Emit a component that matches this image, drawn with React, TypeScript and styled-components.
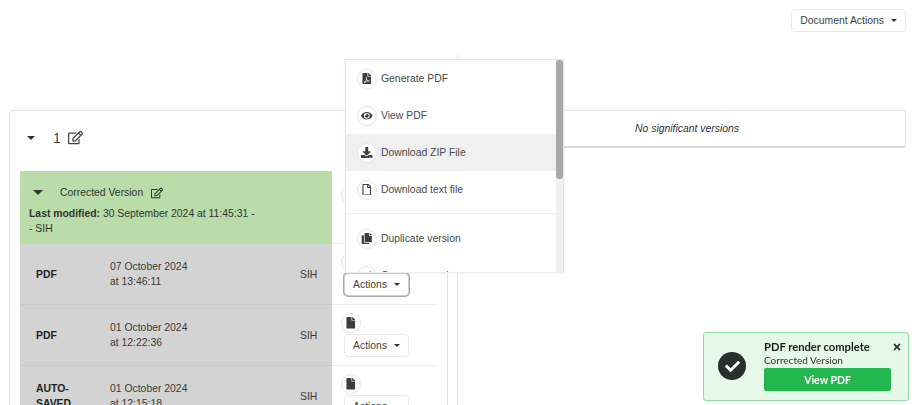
import React from 'react';
import styled, { createGlobalStyle } from 'styled-components';
import { IconType } from 'react-icons';
import { FaCheck, FaCopy, FaDownload, FaEye, FaFile, FaFilePdf, FaRegEdit, FaRegFile, FaTimes, FaExchangeAlt, FaTrash, FaLock } from 'react-icons/fa';

const GlobalStyle = createGlobalStyle`
    html, body {
        margin: 0;
        padding: 0;
        background: #fff;
    }
    body {
        font-family: "Liberation Sans", Arial, sans-serif;
        font-size: 10.4px;
        line-height: 15px;
        color: #3a3a3a;
    }
`;

const Page = styled.div`
    width: 914px;
    height: 405px;
    overflow: hidden;
    box-sizing: border-box;
    padding: 9px 8px 0 9px;
`;

const TopBar = styled.div`
    display: flex;
    justify-content: flex-end;
    height: 23px;
`;

const Button = styled.button<{ $focused?: boolean }>`
    display: inline-flex;
    align-items: center;
    height: 23px;
    box-sizing: border-box;
    padding: 0 8px;
    gap: 7px;
    background: #fff;
    border: 1px solid ${(p) => (p.$focused ? '#cfcfcf' : '#e8e8e8')};
    box-shadow: ${(p) => (p.$focused ? '0 0 0 1px #a8a8a8' : 'none')};
    border-radius: 4px;
    font: inherit;
    color: #3f3f3f;
`;

const Caret = styled.span<{ $size?: number }>`
    display: inline-block;
    width: 0;
    height: 0;
    border-left: ${(p) => p.$size ?? 3}px solid transparent;
    border-right: ${(p) => p.$size ?? 3}px solid transparent;
    border-top: ${(p) => p.$size ?? 3}px solid #333;
`;

const Columns = styled.div`
    display: grid;
    grid-template-columns: 448px 1fr;
    margin-top: 21px;
`;

const LeftColumn = styled.div`
    padding-top: 57px;
    padding-right: 10px;
    box-sizing: border-box;
    width: 449px;
`;

const RightColumn = styled.div`
    border-left: 1px solid #e4e4e4;
    height: 400px;
    padding-top: 57px;
    box-sizing: border-box;
`;

const NoVersions = styled.div`
    height: 38px;
    margin-left: 10px;
    box-sizing: border-box;
    display: flex;
    align-items: center;
    justify-content: center;
    border: 1px solid #e4e4e4;
    border-bottom: 2px solid #dcdcdc;
    border-radius: 3px;
    font-style: italic;
    color: #333;
`;

const Card = styled.div`
    border: 1px solid #e2e2e2;
    border-bottom: none;
    border-radius: 4px 4px 0 0;
    padding: 0 10px;
    height: 400px;
    box-sizing: border-box;
`;

const CardTitle = styled.div`
    display: flex;
    align-items: center;
    height: 54px;
    margin-bottom: 6px;
    padding-left: 7px;
    font-size: 14px;
    color: #444;

    svg {
        font-size: 15px;
        margin-left: 7px;
        margin-top: -1px;
    }
`;

const TitleNumber = styled.span`
    margin-left: 18px;
`;

const VersionTable = styled.div`
    display: flex;
    flex-direction: column;
`;

const Row = styled.div`
    display: grid;
    grid-template-columns: 312px 104px;
`;

const HeaderCell = styled.div`
    background: #b9dca8;
    height: 73px;
    padding: 14px 8px 0 9px;
    box-sizing: border-box;
    border-bottom: 1px solid #c4d6b8;
    color: #333;
`;

const HeaderTitle = styled.div`
    display: flex;
    align-items: center;
    padding-left: 4px;

    svg {
        font-size: 12px;
        margin-left: 8px;
    }
`;

const HeaderName = styled.span`
    margin-left: 17px;
`;

const Modified = styled.div`
    margin-top: 6px;
    width: 228px;
`;

const GreyCell = styled.div`
    background: #d3d3d3;
    display: grid;
    grid-template-columns: 74px 190px 1fr;
    align-items: center;
    height: 61px;
    box-sizing: border-box;
    padding-left: 16px;
    border-bottom: 1px solid #c8c8c8;
    color: #3a3a3a;
`;

const TypeName = styled.strong`
    width: 50px;
    color: #222;
`;

const ActionCell = styled.div<{ $header?: boolean }>`
    padding: ${(p) => (p.$header ? 14 : 8)}px 0 0 9px;
    height: ${(p) => (p.$header ? 73 : 61)}px;
    box-sizing: border-box;
    border-bottom: 1px solid #ececec;
`;

const RoundIcon = styled.span`
    display: flex;
    align-items: center;
    justify-content: center;
    flex: none;
    width: 20px;
    height: 20px;
    box-sizing: border-box;
    border: 1px solid #e6e6e6;
    border-radius: 50%;
    background: #fff;
    color: #3d3d3d;
    font-size: 11.5px;
`;

const ActionsWrap = styled.div`
    position: relative;
    margin: 1px 0 0 3px;
    width: 65px;
`;

const Menu = styled.div`
    position: absolute;
    left: 1px;
    bottom: 100%;
    width: 219px;
    height: 214px;
    z-index: 5;
    background: #fff;
    border: 1px solid #e4e4e4;
    border-bottom-color: #eee;
    box-sizing: border-box;
    box-shadow: 0 1px 3px rgba(0, 0, 0, 0.05);
`;

const MenuList = styled.div`
    height: 100%;
    overflow: hidden;
    padding-right: 7px;
`;

const ScrollTrack = styled.div`
    position: absolute;
    top: 0;
    right: 0;
    bottom: 0;
    width: 7px;
    background: #f0f0f0;
`;

const ScrollThumb = styled.div`
    height: 119px;
    background: #a8a8a8;
    border-radius: 3px;
`;

const MenuItem = styled.div<{ $active?: boolean }>`
    display: flex;
    align-items: center;
    gap: 4px;
    height: 37px;
    padding-left: 11px;
    background: ${(p) => (p.$active ? '#f0f0f0' : 'transparent')};
    color: #4a4a4a;
`;

const MenuDivider = styled.div`
    height: 1px;
    background: #eee;
    margin: 5px 0 6px;
`;

const Toast = styled.div`
    position: fixed;
    right: 5px;
    bottom: 4px;
    width: 206px;
    height: 69px;
    box-sizing: border-box;
    display: flex;
    background: #e6f8e8;
    border: 1px solid #8fdc9f;
    border-radius: 3px;
    font-family: Lato, sans-serif;
    color: #222;
`;

const ToastIcon = styled.div`
    flex: none;
    width: 28px;
    height: 28px;
    margin: 19px 18px 0 14px;
    border-radius: 50%;
    background: #2a2f2e;
    color: #fff;
    display: flex;
    align-items: center;
    justify-content: center;
    font-size: 15px;
`;

const ToastBody = styled.div`
    width: 127px;
    padding-top: 7px;
`;

const ToastTitle = styled.div`
    font-size: 11.2px;
    font-weight: 700;
    line-height: 14px;
    color: #1c1c1c;
`;

const ToastText = styled.div`
    font-size: 10px;
    line-height: 13px;
    color: #333;
`;

const ToastButton = styled.button`
    display: block;
    width: 127px;
    height: 23px;
    margin-top: 1px;
    padding: 0;
    border: none;
    border-radius: 2px;
    background: #22b84f;
    color: #fff;
    font: 700 10.5px Lato, sans-serif;
`;

const ToastClose = styled.span`
    position: absolute;
    top: 9px;
    right: 6px;
    font-size: 10px;
    line-height: 10px;
    color: #333;
`;

type MenuEntry = { label: string; icon: IconType; active?: boolean; divider?: boolean };

const menuEntries: MenuEntry[] = [
    { label: 'Generate PDF', icon: FaFilePdf },
    { label: 'View PDF', icon: FaEye },
    { label: 'Download ZIP File', icon: FaDownload, active: true },
    { label: 'Download text file', icon: FaRegFile, divider: true },
    { label: 'Duplicate version', icon: FaCopy },
    { label: 'Compare versions', icon: FaExchangeAlt },
    { label: 'Lock version', icon: FaLock },
    { label: 'Delete version', icon: FaTrash },
];

type Version = { type: string; date: string; time: string };

const versions: Version[] = [
    { type: 'PDF', date: '07 October 2024', time: 'at 13:46:11' },
    { type: 'PDF', date: '01 October 2024', time: 'at 12:22:36' },
    { type: 'AUTO-SAVED', date: '01 October 2024', time: 'at 12:15:18' },
];

const ActionsMenu: React.FC = () => (
    <Menu>
        <MenuList>
            {menuEntries.map((entry) => (
                <React.Fragment key={entry.label}>
                    <MenuItem $active={entry.active}>
                        <RoundIcon><entry.icon /></RoundIcon>
                        {entry.label}
                    </MenuItem>
                    {entry.divider && <MenuDivider />}
                </React.Fragment>
            ))}
        </MenuList>
        <ScrollTrack><ScrollThumb /></ScrollTrack>
    </Menu>
);

const App: React.FC = () => (
    <Page>
        <GlobalStyle />
        <TopBar>
            <Button>Document Actions <Caret /></Button>
        </TopBar>
        <Columns>
            <LeftColumn>
                <Card>
                    <CardTitle>
                        <Caret $size={4} />
                        <TitleNumber>1</TitleNumber>
                        <FaRegEdit />
                    </CardTitle>
                    <VersionTable>
                        <Row>
                            <HeaderCell>
                                <HeaderTitle>
                                    <Caret $size={5} />
                                    <HeaderName>Corrected Version</HeaderName>
                                    <FaRegEdit />
                                </HeaderTitle>
                                <Modified><strong>Last modified:</strong> 30 September 2024 at 11:45:31 - - SIH</Modified>
                            </HeaderCell>
                            <ActionCell $header>
                                <RoundIcon><FaFile /></RoundIcon>
                            </ActionCell>
                        </Row>
                        {versions.map((version, index) => (
                            <Row key={version.time}>
                                <GreyCell>
                                    <TypeName>{version.type}</TypeName>
                                    <span>{version.date}<br />{version.time}</span>
                                    <span>SIH</span>
                                </GreyCell>
                                <ActionCell>
                                    <RoundIcon><FaFile /></RoundIcon>
                                    <ActionsWrap>
                                        {index === 0 && <ActionsMenu />}
                                        <Button $focused={index === 0}>Actions <Caret /></Button>
                                    </ActionsWrap>
                                </ActionCell>
                            </Row>
                        ))}
                    </VersionTable>
                </Card>
            </LeftColumn>
            <RightColumn>
                <NoVersions>No significant versions</NoVersions>
            </RightColumn>
        </Columns>
        <Toast>
            <ToastIcon><FaCheck /></ToastIcon>
            <ToastBody>
                <ToastTitle>PDF render complete</ToastTitle>
                <ToastText>Corrected Version</ToastText>
                <ToastButton>View PDF</ToastButton>
            </ToastBody>
            <ToastClose><FaTimes /></ToastClose>
        </Toast>
    </Page>
);

export default App;
